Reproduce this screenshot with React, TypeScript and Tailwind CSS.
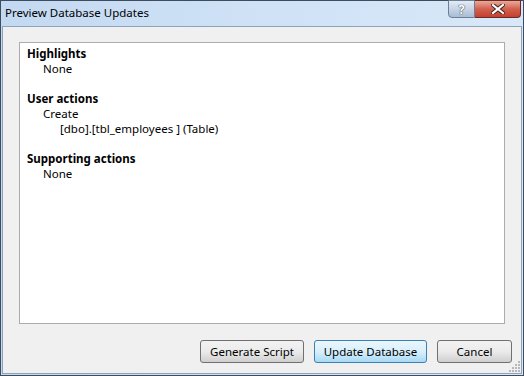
import React from "react";

const font = { fontFamily: '"Noto Sans", "Open Sans", sans-serif' };

function Btn({ label, primary, w }: { label: string; primary?: boolean; w: string }) {
  return (
    <div
      className={`${w} h-[23px] flex items-center justify-center rounded-[3px] border text-[11.5px] text-black ${
        primary
          ? "border-[#3c7fb1] bg-gradient-to-b from-[#eaf6fd] via-[#d9f0fc] to-[#a7d9f5]"
          : "border-[#707070] bg-gradient-to-b from-[#f2f2f2] via-[#ebebeb] to-[#cfcfcf]"
      }`}
    >
      <span className="leading-none">{label}</span>
    </div>
  );
}

export default function App() {
  return (
    <div className="w-[524px] h-[376px] bg-[#f0f0f0]" style={font}>
      <div className="w-full h-full flex flex-col border border-[#3d4d5e] bg-gradient-to-r from-[#c3d9f1] via-[#cfe2f6] to-[#d8e8f8]">
        {/* title bar */}
        <div className="h-[25px] flex items-start relative">
          <span className="pl-[4px] pt-[4px] text-[11.5px] leading-[15px] text-black">Preview Database Updates</span>
          <div className="absolute right-[2px] top-[-1px] flex">
            <div className="w-[27px] h-[18px] rounded-bl-[4px] border border-[#6d7f96] bg-gradient-to-b from-[#e4ecf6] via-[#c6d4e6] to-[#a9bcd3] flex items-center justify-center">
              <span className="text-[13px] font-bold text-white leading-none" style={{ textShadow: "0 0 1px #333, 0 0 1px #333" }}>?</span>
            </div>
            <div className="w-[46px] h-[18px] rounded-br-[4px] border border-l-0 border-[#6b2b23] bg-gradient-to-b from-[#e9a99b] via-[#d2604e] to-[#c4402c] flex items-center justify-center">
              <svg width="14" height="10" viewBox="0 0 14 10">
                <path d="M2 1 L12 9 M12 1 L2 9" stroke="#3a1f1a" strokeWidth="4" strokeLinecap="square" />
                <path d="M2 1 L12 9 M12 1 L2 9" stroke="#ffffff" strokeWidth="2.2" strokeLinecap="square" />
              </svg>
            </div>
          </div>
        </div>
        {/* client */}
        <div className="flex-1 mx-[1px] mb-[1px] border border-[#8ea3ba] bg-[#f0f0f0] flex flex-col relative">
          <div className="pt-[15px] px-[16px]">
            <div className="h-[282px] border border-[#acacac] bg-white pl-[7px] pt-[3px] text-[11.5px] leading-[15px] text-black">
              <div className="font-bold">Highlights</div>
              <div className="pl-[16px]">None</div>
              <div className="h-[15px]" />
              <div className="font-bold">User actions</div>
              <div className="pl-[16px]">Create</div>
              <div className="pl-[33px]">[dbo].[tbl_employees ] (Table)</div>
              <div className="h-[15px]" />
              <div className="font-bold">Supporting actions</div>
              <div className="pl-[16px]">None</div>
            </div>
          </div>
          <div className="mt-[16px] flex justify-end gap-[10px] pr-[9px]">
            <Btn label="Generate Script" w="w-[104px]" />
            <Btn label="Update Database" w="w-[113px]" primary />
            <Btn label="Cancel" w="w-[75px]" />
          </div>
          <svg className="absolute right-[1px] bottom-[1px]" width="11" height="11" viewBox="0 0 11 11">
            {[
              [9, 1], [9, 4], [9, 7], [6, 4], [6, 7], [3, 7], [9, 10], [6, 10], [3, 10], [0, 10],
            ].map(([x, y], i) => (
              <rect key={i} x={x} y={y - 1} width="2" height="2" fill="#b8b8b8" />
            ))}
          </svg>
        </div>
      </div>
    </div>
  );
}
